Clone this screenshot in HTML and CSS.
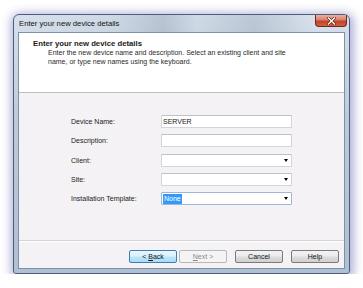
FILE: index.html
```html
<!DOCTYPE html>
<html lang="en">
<head>
    <meta charset="UTF-8">
    <title>Enter your new device details</title>
    <link rel="stylesheet" href="styles.css">
</head>
<body>
    <div class="screen">
        <div class="window">
            <div class="titlebar">
                <span class="title">Enter your new device details</span>
                <span class="close">
                    <svg width="9" height="8" viewBox="0 0 9 8">
                        <path d="M1.5 1 L7.5 7 M7.5 1 L1.5 7" stroke="#5a1d14" stroke-width="2.6" stroke-linecap="square"/>
                        <path d="M1.5 1 L7.5 7 M7.5 1 L1.5 7" stroke="#fff" stroke-width="1.4" stroke-linecap="square"/>
                    </svg>
                </span>
            </div>
            <div class="client">
                <div class="header">
                    <div class="header-title">Enter your new device details</div>
                    <div class="header-desc">Enter the new device name and description. Select an existing client and site<br>name, or type new names using the keyboard.</div>
                </div>
                <div class="form">
                    <label>Device Name:</label>
                    <div class="field">SERVER</div>
                    <label>Description:</label>
                    <div class="field"></div>
                    <label>Client:</label>
                    <div class="field combo"><span class="arrow"></span></div>
                    <label>Site:</label>
                    <div class="field combo"><span class="arrow"></span></div>
                    <label>Installation Template:</label>
                    <div class="field combo focused"><span class="selected">None</span><span class="arrow"></span></div>
                </div>
                <div class="footer">
                    <button class="btn default">&lt; <u>B</u>ack</button>
                    <button class="btn disabled"><u>N</u>ext &gt;</button>
                    <button class="btn spaced">Cancel</button>
                    <button class="btn spaced">Help</button>
                </div>
            </div>
        </div>
    </div>
</body>
</html>
```

FILE: styles.css
```css
body {
    margin: 0;
    background: #fff;
    font-family: "Liberation Sans", Arial, sans-serif;
    color: #1a1a1a;
}
.screen {
    padding: 14px 0 0 13px;
}
.window {
    width: 337px;
    height: 260px;
    box-sizing: border-box;
    border: 1px solid #4f5e78;
    border-radius: 6px 6px 3px 3px;
    padding: 0 4px 4px;
    display: flex;
    flex-direction: column;
    background: linear-gradient(to bottom, #d8e1ec 0%, #bccbdb 40%, #afc0d3 100%);
    box-shadow: 1px 2px 10px 3px rgba(80, 80, 170, 0.45);
}
.titlebar {
    height: 17px;
    margin: 0 -2px 0 -4px;
    padding-left: 5px;
    display: flex;
    justify-content: space-between;
    align-items: flex-start;
    background: linear-gradient(90deg, rgba(255,255,255,0) 0%, rgba(120,140,165,0.1) 30%, rgba(90,110,135,0.25) 45%, rgba(120,140,165,0.08) 55%, rgba(90,110,135,0.22) 72%, rgba(255,255,255,0) 90%);
}
.title {
    font-size: 7.7px;
    line-height: 17px;
    color: #111;
}
.close {
    width: 32px;
    height: 12px;
    box-sizing: border-box;
    border: 1px solid #6b2a20;
    border-top: none;
    border-radius: 0 0 4px 4px;
    background: linear-gradient(to bottom, #eab0a2 0%, #d9816b 45%, #c3412a 55%, #d0603f 100%);
    display: flex;
    align-items: center;
    justify-content: center;
}
.client {
    flex: 1;
    border: 1px solid #7c90a8;
    background: #f5f2f5;
    display: flex;
    flex-direction: column;
}
.header {
    height: 53px;
    background: #fff;
    border-bottom: 1px solid #bfbfbf;
    padding: 6px 0 0 14px;
    box-sizing: content-box;
}
.header-title {
    font-size: 7.75px;
    font-weight: bold;
    line-height: 9px;
}
.header-desc {
    font-size: 7px;
    line-height: 9px;
    margin-left: 15px;
    color: #2a2a2a;
}
.form {
    flex: 1;
    padding: 22px 0 0 52px;
    display: grid;
    grid-template-columns: 90px 131px;
    grid-auto-rows: 13px;
    row-gap: 6.25px;
    align-content: start;
}
.form label {
    font-size: 7px;
    line-height: 13px;
}
.field {
    background: #fff;
    border: 1px solid #d4d5da;
    border-top-color: #bfc1c7;
    border-radius: 1px;
    font-size: 7px;
    line-height: 11px;
    padding: 0 1px;
    display: flex;
    align-items: center;
    justify-content: space-between;
}
.field.focused {
    border-color: #9fb7d2;
}
.selected {
    background: #3399ff;
    color: #fff;
    padding: 0 1px;
    line-height: 10px;
}
.arrow {
    margin-left: auto;
    margin-right: 2px;
    border-left: 2.5px solid transparent;
    border-right: 2.5px solid transparent;
    border-top: 3px solid #000;
}
.footer {
    height: 28px;
    border-top: 1px solid #d4d2d4;
    box-shadow: inset 0 1px #fff;
    display: flex;
    justify-content: flex-end;
    align-items: flex-start;
    padding: 9px 5px 0 0;
    box-sizing: border-box;
    gap: 2px;
}
.btn {
    width: 48px;
    height: 13px;
    padding: 0;
    font-family: "Liberation Sans", Arial, sans-serif;
    font-size: 7px;
    line-height: 11px;
    color: #111;
    border: 1px solid #7a7a7a;
    border-radius: 2px;
    background: linear-gradient(to bottom, #f3f3f3 0%, #ebebeb 48%, #dddddd 52%, #d0d0d0 100%);
}
.btn.default {
    border-color: #3d7fb4;
    background: linear-gradient(to bottom, #eaf6fd 0%, #d9f0fc 48%, #bee6fd 52%, #a9dbf6 100%);
}
.btn.disabled {
    border-color: #b5b9bc;
    background: #f4f4f4;
    color: #8a8a8a;
}
.btn.spaced {
    margin-left: 6px;
}
```
